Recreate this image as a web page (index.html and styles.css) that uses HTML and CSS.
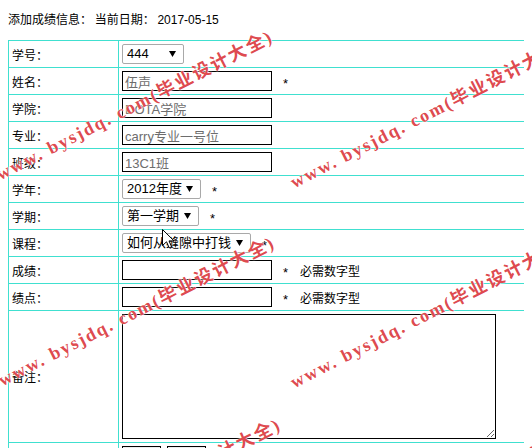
FILE: index.html
```html
<!DOCTYPE html>
<html lang="zh-CN">
<head>
<meta charset="utf-8">
<title>添加成绩信息</title>
<link rel="stylesheet" href="styles.css">
</head>
<body>
<div class="page">
  <div class="header">添加成绩信息：&nbsp;当前日期：&nbsp;<span class="date">2017-05-15</span></div>
  <div class="form-grid">
    <div class="label">学号：</div>
    <div class="field"><select class="sel sel-id"><option>444</option></select></div>

    <div class="label">姓名：</div>
    <div class="field"><input class="txt ro" type="text" value="伍声" readonly><span class="star">*</span></div>

    <div class="label">学院：</div>
    <div class="field"><input class="txt ro" type="text" value="DOTA学院" readonly></div>

    <div class="label">专业：</div>
    <div class="field"><input class="txt ro" type="text" value="carry专业一号位" readonly></div>

    <div class="label">班级：</div>
    <div class="field"><input class="txt ro" type="text" value="13C1班" readonly></div>

    <div class="label">学年：</div>
    <div class="field"><select class="sel"><option>2012年度</option></select><span class="star">*</span></div>

    <div class="label">学期：</div>
    <div class="field"><select class="sel"><option>第一学期</option></select><span class="star">*</span></div>

    <div class="label">课程：</div>
    <div class="field"><select class="sel"><option>如何从缝隙中打钱</option></select><span class="star">*</span></div>

    <div class="label">成绩：</div>
    <div class="field"><input class="txt" type="text" value=""><span class="star">*</span><span class="hint">必需数字型</span></div>

    <div class="label">绩点：</div>
    <div class="field"><input class="txt" type="text" value=""><span class="star">*</span><span class="hint">必需数字型</span></div>

    <div class="label tall">备注：</div>
    <div class="field tall top"><textarea class="memo"></textarea></div>

    <div class="label btnrow"></div>
    <div class="field btnrow top"><button class="btn" type="submit">添加</button><button class="btn" type="reset">重置</button></div>
  </div>

  <div class="watermark" aria-hidden="true">
    <span class="wm wm-a">www. bysjdq. com(毕业设计大全)</span>
    <span class="wm wm-b">www. bysjdq. com(毕业设计大全)</span>
    <span class="wm wm-c">www. bysjdq. com(毕业设计大全)</span>
    <span class="wm wm-d">www. bysjdq. com(毕业设计大全)</span>
    <span class="wm wm-e">www. bysjdq. com(毕业设计大全)</span>
    <span class="wm wm-f">www. bysjdq. com(毕业设计大全)</span>
  </div>

  <svg class="cursor" width="13" height="20" viewBox="0 0 13 20" aria-hidden="true">
    <path d="M0.5 0.5 L0.5 16.5 L4.5 12.8 L7.2 18.8 L9.6 17.8 L7 11.9 L12 11.9 Z" fill="#fff" stroke="#000" stroke-width="1" stroke-linejoin="miter"/>
  </svg>
</div>
</body>
</html>
```
FILE: styles.css
```css
html, body {
  margin: 0;
  padding: 0;
  overflow: hidden;
  background: #fff;
}

body {
  margin: 8px;
  font-family: "Noto Sans CJK SC", "Liberation Sans", sans-serif;
  font-size: 12px;
  color: #000;
}

.page {
  width: 800px;
}

.header {
  height: 32px;
  padding-top: 4px;
  box-sizing: border-box;
  line-height: 14px;
  font-size: 12px;
}

.date {
  font-family: "Liberation Sans", sans-serif;
  font-size: 12px;
}

.form-grid {
  display: grid;
  grid-template-columns: 110px 620px;
  border-top: 1px solid #40e0d0;
  border-left: 1px solid #40e0d0;
  width: max-content;
}

.label,
.field {
  height: 27px;
  box-sizing: border-box;
  border-right: 1px solid #40e0d0;
  border-bottom: 1px solid #40e0d0;
  display: flex;
  align-items: center;
  padding-left: 3px;
}

.label {
  font-size: 12px;
}

.tall {
  height: 132px;
}

.btnrow {
  height: 30px;
}

.top {
  align-items: flex-start;
  padding-top: 3px;
}

.txt {
  width: 150px;
  height: 20px;
  box-sizing: border-box;
  border: 1px solid #000;
  margin: 0;
  padding: 0 2px;
  font-family: "Liberation Sans", "Noto Sans CJK SC", sans-serif;
  font-size: 13px;
  color: #000;
  background: #fff;
  outline: none;
}

.ro {
  color: #6d6d6d;
}

.sel {
  -webkit-appearance: none;
  appearance: none;
  height: 20px;
  box-sizing: border-box;
  margin: 0;
  padding: 0 18px 0 4px;
  border: 1px solid #a9a9a9;
  border-radius: 2px;
  background-color: #fff;
  background-image: url("data:image/svg+xml;utf8,<svg xmlns='http://www.w3.org/2000/svg' width='7' height='6'><path d='M0 0 L7 0 L3.5 6 Z' fill='black'/></svg>");
  background-repeat: no-repeat;
  background-position: right 7px center;
  font-family: "Liberation Sans", "Noto Sans CJK SC", sans-serif;
  font-size: 13px;
  line-height: 18px;
  color: #000;
}

.sel-id {
  width: 62px;
}

.star {
  margin-left: 11px;
  margin-top: 4px;
  font-family: "Liberation Sans", sans-serif;
  font-size: 13px;
}

.hint {
  margin-left: 12px;
  font-size: 12px;
}

.memo {
  width: 374px;
  height: 125px;
  box-sizing: border-box;
  margin: 0;
  border: 1px solid #000;
  padding: 2px;
  font-family: "Liberation Sans", "Noto Sans CJK SC", sans-serif;
  font-size: 13px;
  resize: both;
  outline: none;
}

.btn {
  width: 39px;
  height: 22px;
  margin: 0 6px 0 0;
  padding: 0;
  border: 1px solid #000;
  background: #eee;
  font-family: "Noto Sans CJK SC", sans-serif;
  font-size: 12px;
}

.watermark {
  position: absolute;
  left: 0;
  top: 0;
  width: 532px;
  height: 448px;
  overflow: hidden;
  pointer-events: none;
}

.wm {
  position: absolute;
  white-space: nowrap;
  font-family: "Liberation Serif", "Noto Sans CJK SC", serif;
  font-weight: bold;
  font-size: 18px;
  line-height: 20px;
  letter-spacing: 2px;
  color: rgba(218, 50, 56, 0.9);
  text-shadow: 0 0 1px #fff, 0 0 2px #fff;
  transform-origin: 0 100%;
  transform: rotate(-27deg);
}

.wm-a { left: 2px;   top: 164px; }
.wm-b { left: 296px; top: 172px; }
.wm-c { left: 4px;   top: 370px; }
.wm-d { left: 296px; top: 372px; }
.wm-e { left: 10px;  top: 552px; }
.wm-f { left: 300px; top: 566px; }

.cursor {
  position: absolute;
  left: 162px;
  top: 229px;
}
```
